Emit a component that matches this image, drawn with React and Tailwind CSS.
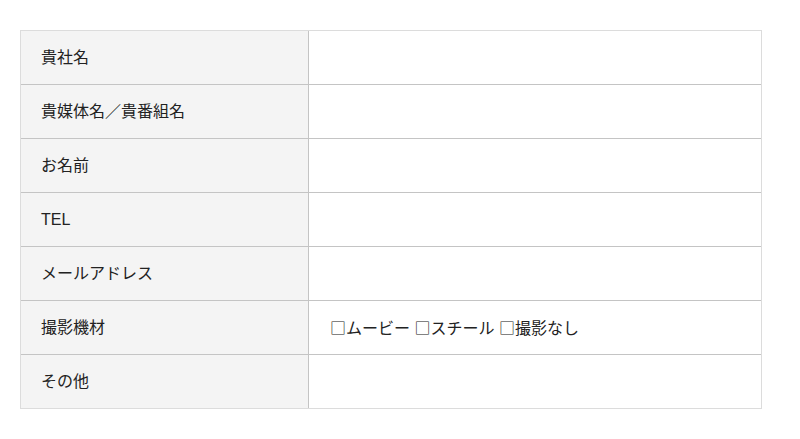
const rows = [
  { label: "貴社名" },
  { label: "貴媒体名／貴番組名" },
  { label: "お名前" },
  { label: "TEL" },
  { label: "メールアドレス" },
  { label: "撮影機材", options: ["ムービー", "スチール", "撮影なし"] },
  { label: "その他" },
];

const App = () => {
  return (
    <div
      className="min-h-screen bg-white pt-[30px] pl-[20px] text-[#222]"
      style={{ fontFamily: '"Liberation Sans", "Noto Sans CJK JP", sans-serif' }}
    >
      <div className="w-[742px] border border-[#dcdcdc]">
        {rows.map((row, i) => (
          <div
            key={i}
            className={
              i < rows.length - 1
                ? "flex h-[54px] border-b border-[#c4c4c4]"
                : "flex h-[53px]"
            }
          >
            <div className="flex w-[288px] items-center border-r border-[#c4c4c4] bg-[#f4f4f4] pl-[20px] text-[16px]">
              {row.label}
            </div>
            <div className="flex flex-1 items-center pl-[21px] text-[16px]">
              {row.options &&
                row.options.map((opt, j) => (
                  <span key={j} className="whitespace-pre">
                    <span className="font-['Noto_Sans_CJK_JP']">□</span>
                    {opt}
                    {j < row.options.length - 1 ? " " : ""}
                  </span>
                ))}
            </div>
          </div>
        ))}
      </div>
    </div>
  );
};

export default App;
